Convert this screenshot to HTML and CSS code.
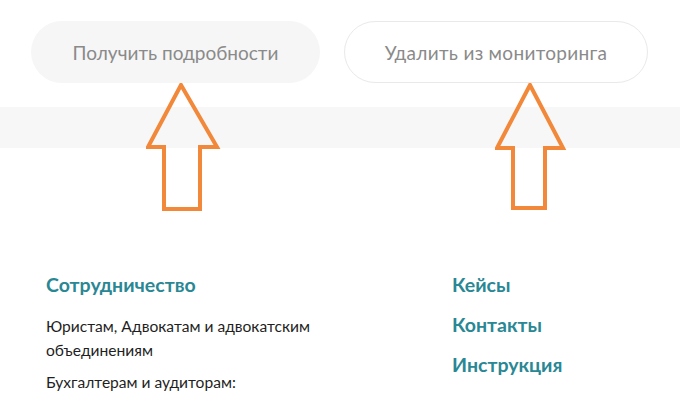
FILE: index.html
```html
<!DOCTYPE html>
<html lang="ru">
<head>
<meta charset="utf-8">
<link rel="stylesheet" href="styles.css">
</head>
<body>
<div class="page">
  <div class="actions">
    <button class="btn btn-fill">Получить подробности</button>
    <button class="btn btn-outline">Удалить из мониторинга</button>
  </div>
  <div class="band"></div>
  <footer class="footer">
    <div class="col col-left">
      <a class="head">Сотрудничество</a>
      <p class="item first">Юристам, Адвокатам и адвокатским<br>объединениям</p>
      <p class="item">Бухгалтерам и аудиторам:</p>
    </div>
    <div class="col col-right">
      <a class="head">Кейсы</a>
      <a class="head">Контакты</a>
      <a class="head">Инструкция</a>
    </div>
  </footer>
  <svg class="arrow arrow-1" width="80" height="130" viewBox="0 0 80 130">
    <path d="M35 2 L2 64 L18 64 L18 126 L54 126 L54 64 L71 64 Z" fill="none" stroke="#f2883a" stroke-width="4" stroke-linejoin="miter"/>
  </svg>
  <svg class="arrow arrow-2" width="80" height="130" viewBox="0 0 80 130">
    <path d="M35 2 L2 65 L18 65 L18 125 L50 125 L50 65 L68 65 Z" fill="none" stroke="#f2883a" stroke-width="4" stroke-linejoin="miter"/>
  </svg>
</div>
</body>
</html>
```
FILE: styles.css
```css
html, body {
  margin: 0;
  padding: 0;
  background: #ffffff;
}
.page {
  position: relative;
  width: 680px;
  height: 402px;
  overflow: hidden;
  font-family: "Lato", "Noto Sans", sans-serif;
}
.actions {
  display: flex;
  gap: 24px;
  padding: 21px 0 0 31px;
}
.btn {
  height: 62px;
  border-radius: 31px;
  font-family: inherit;
  font-size: 19px;
  color: #8a8a8a;
  padding: 0;
  box-sizing: border-box;
}
.btn-fill {
  width: 289px;
  background: #f6f6f6;
  border: none;
}
.btn-outline {
  width: 304px;
  background: #ffffff;
  border: 1px solid #e9e9e9;
  letter-spacing: 0.3px;
}
.band {
  margin-top: 24px;
  height: 41px;
  background: #f7f7f7;
}
.footer {
  display: flex;
  padding: 125px 0 0 46px;
}
.col {
  display: flex;
  flex-direction: column;
}
.col-left {
  width: 406px;
}
.head {
  color: #2a8794;
  font-weight: 700;
  font-size: 19.5px;
  line-height: 24px;
}
.col-right {
  gap: 16px;
}
.item {
  margin: 8px 0 0;
  color: #1f1f1f;
  font-size: 15.6px;
  line-height: 24px;
}
.item.first {
  margin-top: 17px;
}
.arrow {
  position: absolute;
  top: 83px;
}
.arrow-1 { left: 146px; }
.arrow-2 { left: 495px; }
```
